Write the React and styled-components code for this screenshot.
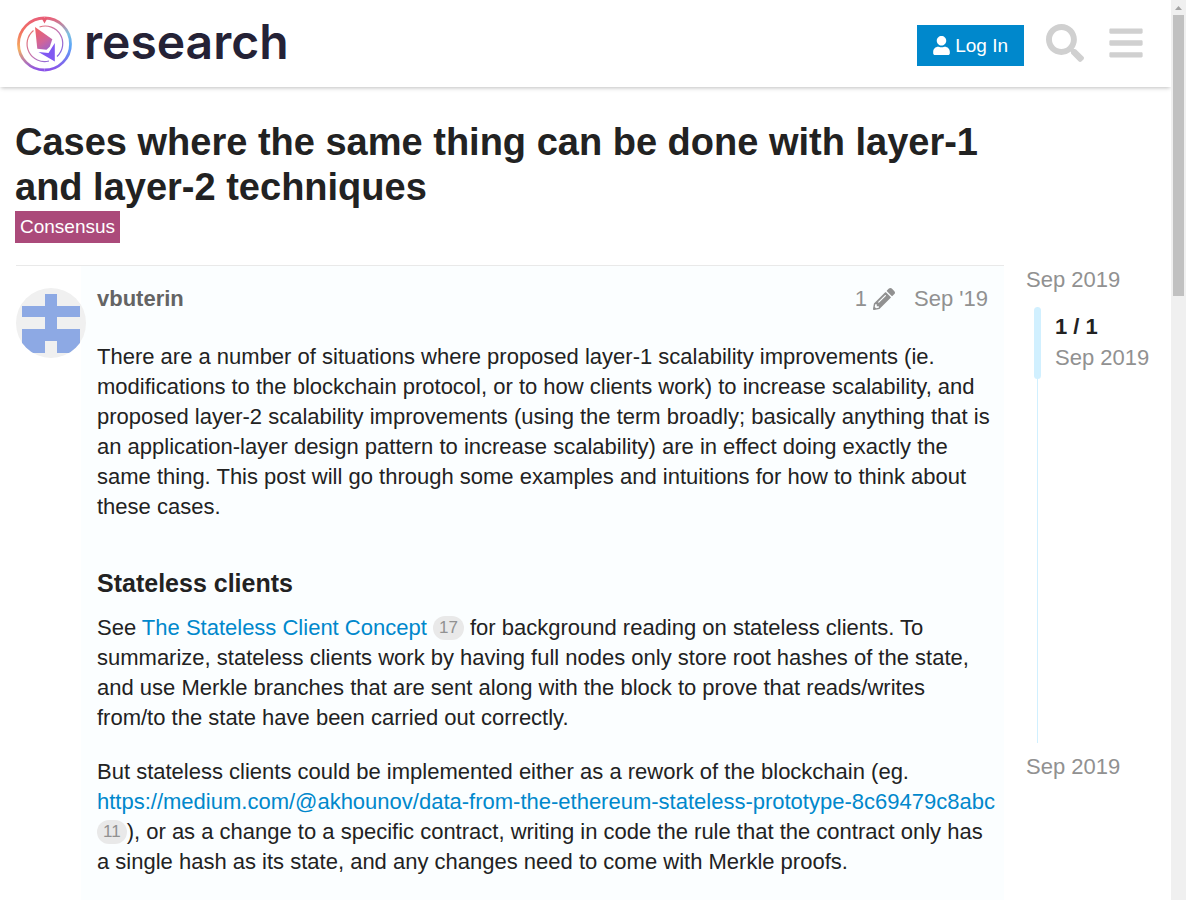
import React from "react";
import styled, { createGlobalStyle } from "styled-components";
import { FaUser, FaSearch, FaBars, FaPencilAlt } from "react-icons/fa";

const GlobalStyle = createGlobalStyle`
  *, *::before, *::after { box-sizing: border-box; }
  body {
    margin: 0;
    background: #fff;
    color: #222;
    font-family: "Liberation Sans", Arial, sans-serif;
    font-size: 22px;
    line-height: 30px;
  }
  a { color: #0088cc; text-decoration: none; }
  button { font-family: inherit; border: 0; cursor: pointer; }
`;

const Shell = styled.div`
  display: grid;
  grid-template-columns: minmax(0, 1fr) 15px;
  height: 100vh;
`;

const Page = styled.div`
  overflow: hidden;
`;

const Header = styled.header`
  display: flex;
  align-items: center;
  justify-content: space-between;
  height: 87px;
  padding: 0 9px 0 16px;
  background: #fff;
  box-shadow: 0 2px 4px -1px rgba(0, 0, 0, 0.25);
`;

const Brand = styled.a`
  display: flex;
  align-items: center;
  gap: 10px;
  color: #252236;
`;

const Wordmark = styled.span`
  padding-bottom: 4px;
  font: 600 48px/56px Inter, "Liberation Sans", sans-serif;
`;

const Actions = styled.nav`
  display: flex;
  align-items: center;
`;

const LoginButton = styled.button`
  display: flex;
  align-items: center;
  gap: 5px;
  height: 41px;
  margin: 4px 16px 0 0;
  padding: 0 16px;
  background: #0088cc;
  color: #fff;
  font-size: 19px;
`;

const UserIcon = styled(FaUser)`
  width: 17px;
  height: 19px;
`;

const IconButton = styled.button`
  display: flex;
  align-items: center;
  justify-content: center;
  width: ${(p) => (p.$wide ? "72px" : "50px")};
  height: 56px;
  margin-bottom: 2px;
  padding: 0;
  background: none;
  color: #d0d0d0;
`;

const Main = styled.main`
  padding: 33px 16px 0 15px;
`;

const Title = styled.h1`
  max-width: 1000px;
  margin: 0;
  font-size: 38px;
  line-height: 45px;
`;

const Category = styled.a`
  display: inline-block;
  margin-top: 1px;
  padding: 0 5px;
  background: #ab4a7a;
  color: #fff;
  font-size: 19px;
  line-height: 32px;
`;

const Columns = styled.div`
  display: grid;
  grid-template-columns: minmax(0, 1fr) 129px;
  gap: 22px;
  padding: 22px 0 0 1px;
`;

const Post = styled.article`
  display: grid;
  grid-template-columns: 65px minmax(0, 1fr);
  border-top: 1px solid #e9e9e9;
`;

const Avatar = styled.a`
  display: block;
  z-index: 1;
  width: 70px;
  height: 70px;
  margin-top: 22px;
`;

const PostBody = styled.div`
  padding: 18px 8px 24px 16px;
  background: #fbfeff;
`;

const PostMeta = styled.div`
  display: flex;
  align-items: center;
  justify-content: space-between;
  padding-right: 8px;
  margin-bottom: 28px;
  color: #919191;
`;

const Author = styled.a`
  color: #646464;
  font-weight: bold;
`;

const MetaInfo = styled.div`
  display: flex;
  align-items: center;
  gap: 19px;
`;

const Edits = styled.button`
  display: flex;
  align-items: center;
  gap: 6px;
  padding: 0;
  background: none;
  color: inherit;
  font-size: 22px;
`;

const MetaLink = styled.a`
  color: inherit;
`;

const Paragraph = styled.p`
  margin: 0 0 24px;
`;

const SectionTitle = styled.h3`
  margin: 46px 0 15px;
  font-size: 25px;
  line-height: 30px;
`;

const Clicks = styled.span`
  display: inline-block;
  padding: 0 6px;
  border-radius: 12px;
  background: #e9e9e9;
  color: #919191;
  font-size: 17px;
  line-height: 24px;
  vertical-align: 2px;
`;

const Timeline = styled.aside`
  display: flex;
  flex-direction: column;
`;

const DateLink = styled.a`
  color: #919191;
`;

const Track = styled.div`
  height: 436px;
  margin: 12px 0 9px 11px;
  border-left: 1px solid #d1f0ff;
`;

const Scroller = styled.div`
  display: flex;
  align-items: stretch;
  gap: 14px;
  height: 72px;
  margin-left: -4px;
`;

const Handle = styled.div`
  width: 7px;
  border-radius: 4px;
  background: #d1f0ff;
`;

const Position = styled.div`
  display: flex;
  flex-direction: column;
  justify-content: center;
  padding-bottom: 2px;
  color: #919191;
  line-height: 31px;
  white-space: nowrap;
`;

const Current = styled.strong`
  color: #222;
`;

const ScrollRail = styled.div`
  display: flex;
  flex-direction: column;
  align-items: center;
  background: #f0f0f0;
`;

const ScrollArrow = styled.svg`
  display: block;
  width: 15px;
  height: 15px;
`;

const ScrollThumb = styled.div`
  width: 11px;
  height: 281px;
  background: #c1c1c1;
`;

function Logo() {
  return (
    <svg width="58" height="58" viewBox="0 0 58 58" aria-hidden="true">
      <defs>
        <linearGradient id="gem" gradientUnits="userSpaceOnUse" x1="19" y1="12" x2="40" y2="42">
          <stop offset="0" stopColor="#f5625f" />
          <stop offset="0.45" stopColor="#d0659a" />
          <stop offset="0.75" stopColor="#9a62cc" />
          <stop offset="1" stopColor="#7a55f5" />
        </linearGradient>
        <linearGradient id="left" x1="0" y1="0" x2="0" y2="1">
          <stop offset="0" stopColor="#e96078" />
          <stop offset="0.25" stopColor="#f27060" />
          <stop offset="0.6" stopColor="#f5b060" />
          <stop offset="1" stopColor="#8a52e8" />
        </linearGradient>
        <linearGradient id="right" x1="0" y1="0" x2="0" y2="1">
          <stop offset="0" stopColor="#e96078" />
          <stop offset="0.3" stopColor="#7fc0e0" />
          <stop offset="0.55" stopColor="#5ba5f8" />
          <stop offset="1" stopColor="#8a52e8" />
        </linearGradient>
        <linearGradient id="inner" x1="0" y1="0" x2="1" y2="1">
          <stop offset="0" stopColor="#f2745f" />
          <stop offset="0.5" stopColor="#c575b0" />
          <stop offset="1" stopColor="#6c62f5" />
        </linearGradient>
      </defs>
      <path d="M28.500 3A26 26 0 0 0 28.500 55" fill="none" stroke="url(#left)" strokeWidth="2.8" />
      <path d="M28.500 3A26 26 0 0 1 28.500 55" fill="none" stroke="url(#right)" strokeWidth="2.8" />
      <path d="M25.500 3h6l-3 5.500z" fill="#e65b70" />
      <path d="M23.500 12A17.500 17.500 0 0 1 41 41.500M33 46A17.500 17.500 0 0 1 17.500 15.500" fill="none" stroke="url(#inner)" strokeWidth="1.2" />
      <path d="M19 12L36.300 24.200L33.800 31.800L30.500 34.800L21.300 33.700Z" fill="url(#gem)" />
      <path d="M22.500 37L32.500 38L38.800 28L38.800 46.500Z" fill="#8058f2" />
    </svg>
  );
}

function Identicon() {
  return (
    <svg width="70" height="70" viewBox="0 0 70 70" role="img" aria-label="vbuterin">
      <defs>
        <clipPath id="round"><circle cx="35" cy="35" r="35" /></clipPath>
      </defs>
      <g clipPath="url(#round)">
        <rect width="70" height="70" fill="#f0f0f0" />
        <path d="M29 6h12v12h23v11H41v12h23v24H41V53H29v12H6V41h23V29H6V18h23z" fill="#8da9e4" />
      </g>
    </svg>
  );
}

export default function App() {
  return (
    <>
      <GlobalStyle />
      <Shell>
        <Page>
          <Header>
            <Brand href="#">
              <Logo />
              <Wordmark>research</Wordmark>
            </Brand>
            <Actions>
              <LoginButton><UserIcon />Log In</LoginButton>
              <IconButton aria-label="Search"><FaSearch size={38} /></IconButton>
              <IconButton $wide aria-label="Menu"><FaBars size={38} /></IconButton>
            </Actions>
          </Header>
          <Main>
            <Title>Cases where the same thing can be done with layer-1 and layer-2 techniques</Title>
            <Category href="#">Consensus</Category>
            <Columns>
              <Post>
                <Avatar href="#"><Identicon /></Avatar>
                <PostBody>
                  <PostMeta>
                    <Author href="#">vbuterin</Author>
                    <MetaInfo>
                      <Edits>1 <FaPencilAlt /></Edits>
                      <MetaLink href="#">Sep '19</MetaLink>
                    </MetaInfo>
                  </PostMeta>
                  <Paragraph>
                    There are a number of situations where proposed layer-1 scalability improvements (ie.
                    modifications to the blockchain protocol, or to how clients work) to increase scalability, and
                    proposed layer-2 scalability improvements (using the term broadly; basically anything that is
                    an application-layer design pattern to increase scalability) are in effect doing exactly the
                    same thing. This post will go through some examples and intuitions for how to think about
                    these cases.
                  </Paragraph>
                  <SectionTitle>Stateless clients</SectionTitle>
                  <Paragraph>
                    See <a href="#">The Stateless Client Concept</a> <Clicks>17</Clicks> for background reading on
                    stateless clients. To summarize, stateless clients work by having full nodes only store root
                    hashes of the state, and use Merkle branches that are sent along with the block to prove that
                    reads/writes from/to the state have been carried out correctly.
                  </Paragraph>
                  <Paragraph>
                    But stateless clients could be implemented either as a rework of the blockchain (eg.{" "}
                    <a href="#">https://medium.com/@akhounov/data-from-the-ethereum-stateless-prototype-8c69479c8abc</a>{" "}
                    <Clicks>11</Clicks>), or as a change to a specific contract, writing in code the rule that the
                    contract only has a single hash as its state, and any changes need to come with Merkle proofs.
                  </Paragraph>
                </PostBody>
              </Post>
              <Timeline>
                <DateLink href="#">Sep 2019</DateLink>
                <Track>
                  <Scroller>
                    <Handle />
                    <Position><Current>1 / 1</Current>Sep 2019</Position>
                  </Scroller>
                </Track>
                <DateLink href="#">Sep 2019</DateLink>
              </Timeline>
            </Columns>
          </Main>
        </Page>
        <ScrollRail>
          <ScrollArrow viewBox="0 0 15 15"><path d="M4 10h7L7.500 6z" fill="#a3a3a3" /></ScrollArrow>
          <ScrollThumb />
        </ScrollRail>
      </Shell>
    </>
  );
}
